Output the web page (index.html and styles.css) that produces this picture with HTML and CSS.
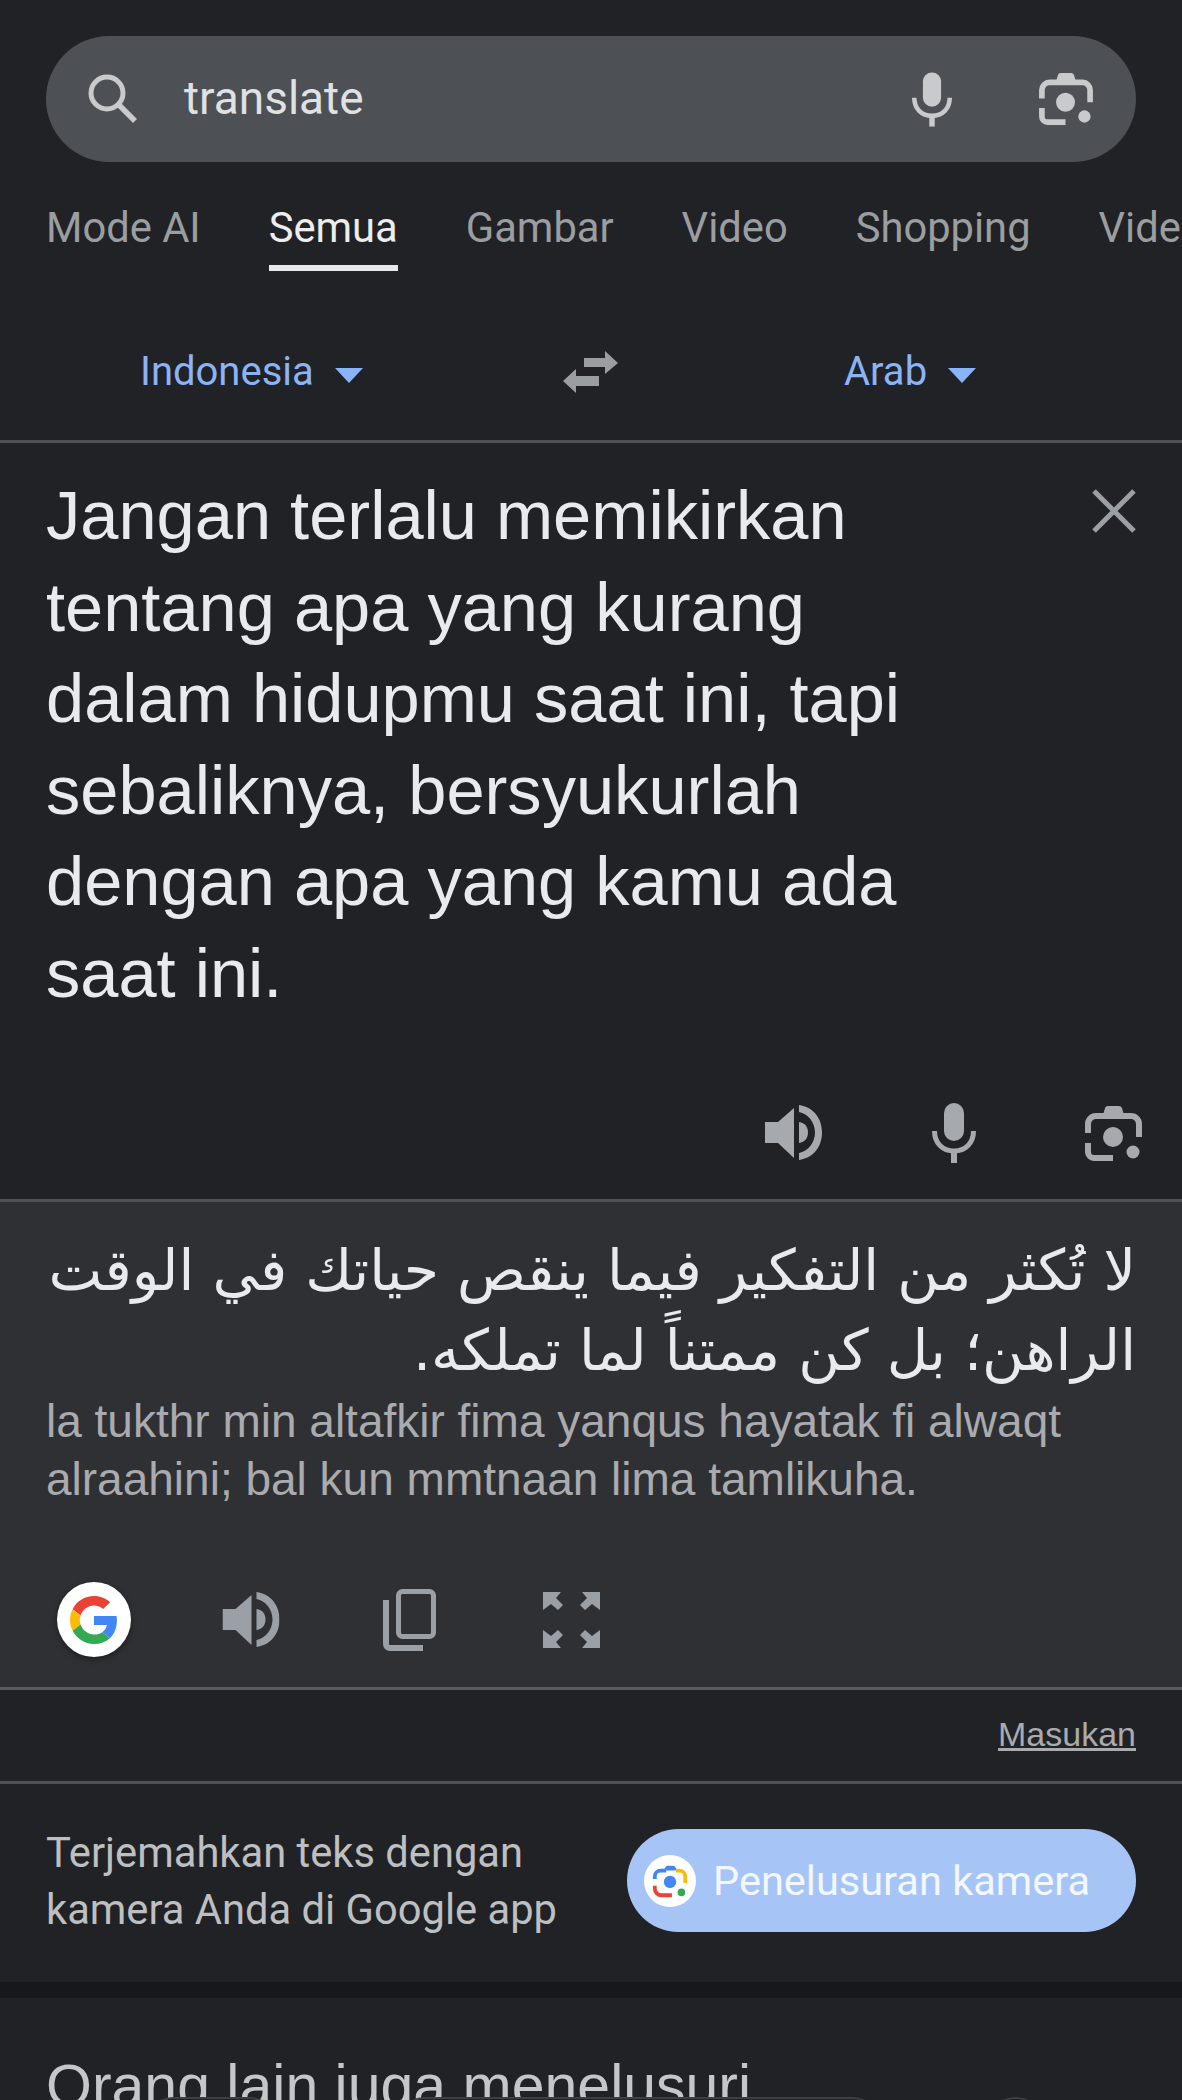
FILE: index.html
```html
<!DOCTYPE html>
<html lang="id">
<head>
    <meta charset="UTF-8">
    <title>translate</title>
    <link rel="stylesheet" href="styles.css">
</head>
<body>
<div class="page">
    <header class="top">
        <div class="search">
            <svg class="search-icon" viewBox="0 0 50 50"><circle cx="19" cy="19" r="16" fill="none" stroke="currentColor" stroke-width="5"/><path d="M30.500 30.500L47 47" stroke="currentColor" stroke-width="5.500" fill="none"/></svg>
            <span class="query">translate</span>
            <svg class="search-mic" viewBox="0 0 44 60"><use href="#mic"/></svg>
            <svg class="search-lens" viewBox="0 0 57 55"><use href="#lens"/></svg>
        </div>
        <nav class="tabs">
            <a href="#">Mode AI</a>
            <a href="#" class="on">Semua</a>
            <a href="#">Gambar</a>
            <a href="#">Video</a>
            <a href="#">Shopping</a>
            <a href="#">Video</a>
        </nav>
    </header>

    <div class="langs">
        <a href="#" class="lang lang-from">Indonesia<i class="caret"></i></a>
        <svg class="swap" viewBox="0 0 55 42"><path d="M21 7h21V0l13 12-13 11v-7H21zM36 25H13v-7L0 30l13 12v-7h23z" fill="currentColor"/></svg>
        <a href="#" class="lang lang-to">Arab<i class="caret"></i></a>
    </div>

    <section class="source">
        <p class="source-text">Jangan terlalu memikirkan tentang apa yang kurang dalam hidupmu saat ini, tapi sebaliknya, bersyukurlah dengan apa yang kamu ada saat ini.</p>
        <svg class="clear" viewBox="0 0 44 44"><path d="M2 2l40 40M42 2L2 42" stroke="currentColor" stroke-width="5" fill="none"/></svg>
        <div class="source-tools">
            <svg class="ic-speaker" viewBox="0 0 57 56"><use href="#speaker"/></svg>
            <svg class="ic-mic" viewBox="0 0 44 60"><use href="#mic"/></svg>
            <svg class="ic-lens" viewBox="0 0 57 55"><use href="#lens"/></svg>
        </div>
    </section>

    <section class="result">
        <p class="arabic" dir="rtl" lang="ar">لا تُكثر من التفكير فيما ينقص حياتك في الوقت<br>الراهن؛ بل كن ممتناً لما تملكه.</p>
        <p class="latin">la tukthr min altafkir fima yanqus hayatak fi alwaqt alraahini; bal kun mmtnaan lima tamlikuha.</p>
        <div class="result-tools">
            <span class="g-badge">
                <svg viewBox="0 0 48 48"><path fill="#ea4335" d="M24 9.500c3.500 0 6.700 1.200 9.200 3.600l6.900-6.900C35.900 2.400 30.500 0 24 0 14.600 0 6.500 5.400 2.600 13.200l8 6.200C12.500 13.700 17.800 9.500 24 9.500z"/><path fill="#4285f4" d="M46.900 24.500c0-1.600-.2-3.100-.4-4.500H24v9h12.900c-.6 3-2.200 5.500-4.700 7.200l7.700 6c4.500-4.200 7-10.300 7-17.700z"/><path fill="#fbbc05" d="M10.600 28.600c-.5-1.500-.8-3-.8-4.600s.3-3.100.8-4.600l-8-6.200C.9 16.500 0 20.100 0 24s.9 7.500 2.600 10.800l8-6.200z"/><path fill="#34a853" d="M24 48c6.500 0 11.900-2.100 15.900-5.800l-7.700-6c-2.200 1.400-4.900 2.300-8.200 2.300-6.200 0-11.500-4.200-13.400-9.900l-8 6.200C6.500 42.600 14.600 48 24 48z"/></svg>
            </span>
            <svg class="ic-speaker2" viewBox="0 0 57 56"><use href="#speaker"/></svg>
            <svg class="ic-copy" viewBox="0 0 53 63"><rect x="15.500" y="3.500" width="35" height="45" rx="4" fill="none" stroke="currentColor" stroke-width="5"/><path d="M3 12v44a4 4 0 0 0 4 4h33" fill="none" stroke="currentColor" stroke-width="6"/></svg>
            <svg class="ic-expand" viewBox="0 0 57 56">
                <path fill="currentColor" d="M0 0h18l-5 6 7 7-5 5-7-6-8 6z"/>
                <path fill="currentColor" d="M0 0h18l-5 6 7 7-5 5-7-6-8 6z" transform="matrix(-1 0 0 1 57 0)"/>
                <path fill="currentColor" d="M0 0h18l-5 6 7 7-5 5-7-6-8 6z" transform="matrix(1 0 0 -1 0 56)"/>
                <path fill="currentColor" d="M0 0h18l-5 6 7 7-5 5-7-6-8 6z" transform="matrix(-1 0 0 -1 57 56)"/>
            </svg>
        </div>
    </section>

    <div class="feedback"><a href="#">Masukan</a></div>

    <section class="promo">
        <p>Terjemahkan teks dengan kamera Anda di Google app</p>
        <a href="#" class="promo-btn">
            <span class="lens-badge">
                <svg viewBox="0 0 40 40"><path d="M4 18v-3a6 6 0 0 1 6-6h6" fill="none" stroke="#4285f4" stroke-width="4"/><path d="M13 9l2-3a3 3 0 0 1 3-2h5a3 3 0 0 1 3 2l2 3z" fill="#4285f4"/><path d="M26 9h4a6 6 0 0 1 6 6v7" fill="none" stroke="#fbbc05" stroke-width="4"/><path d="M4 25v3a7 7 0 0 0 7 7h11" fill="none" stroke="#ea4335" stroke-width="4"/><circle cx="20" cy="21" r="6.500" fill="#4285f4"/><circle cx="32" cy="32" r="4" fill="#34a853"/></svg>
            </span>
            Penelusuran kamera
        </a>
    </section>

    <section class="related">
        <h2>Orang lain juga menelusuri</h2>
        <div class="chips">
            <span class="chip chip-a"></span>
            <span class="chip chip-b"></span>
            <span class="chip chip-c"></span>
        </div>
    </section>
</div>

<svg class="defs" width="0" height="0">
    <symbol id="mic" viewBox="0 0 44 60"><rect x="12" y="0" width="20" height="38" rx="10" fill="currentColor"/><path d="M2.500 28c0 12 8 20 19.500 20s19.500-8 19.500-20" fill="none" stroke="currentColor" stroke-width="5"/><path d="M22 46v14" stroke="currentColor" stroke-width="6"/></symbol>
    <symbol id="lens" viewBox="0 0 57 55"><path d="M3 27V18a8 8 0 0 1 8-8h35a8 8 0 0 1 8 8v13" fill="none" stroke="currentColor" stroke-width="6"/><path d="M18 9l2-7q.5-2 3-2h11q2 0 3 2l2 7z" fill="currentColor"/><path d="M3 37v9a6 6 0 0 0 6 6h19" fill="none" stroke="currentColor" stroke-width="6"/><circle cx="28" cy="31" r="10" fill="currentColor"/><circle cx="48" cy="46" r="6.500" fill="currentColor"/></symbol>
    <symbol id="speaker" viewBox="0 0 57 56"><path d="M0 17h13L29 3v50L13 38H0z" fill="currentColor"/><path d="M34 17c6 1 9 5 9 10.500s-3 9.500-9 10.500z" fill="currentColor"/><path d="M34 0c14 2 23 13 23 27.500S48 53 34 55v-7c9-2 16-10 16-20.500S43 9 34 7z" fill="currentColor"/></symbol>
</svg>
</body>
</html>
```

FILE: styles.css
```css
* {
    margin: 0;
    padding: 0;
    box-sizing: border-box;
}
a {
    text-decoration: none;
    color: inherit;
}
body {
    background: #212226;
    font-family: "Liberation Sans", Arial, sans-serif;
    overflow: hidden;
}
.page {
    width: 1182px;
    height: 2100px;
    overflow: hidden;
}
.defs {
    position: absolute;
}

/* search + tabs */
.top {
    height: 271px;
    padding-top: 36px;
}
.search {
    height: 126px;
    margin: 0 46px;
    padding: 0 43px 0 42px;
    border-radius: 63px;
    background: #4d5054;
    color: #c8cacb;
    display: flex;
    align-items: center;
}
.search-icon {
    width: 50px;
    height: 50px;
}
.query {
    flex: 1;
    margin: 0 0 2px 46px;
    font-family: Roboto, sans-serif;
    font-size: 46px;
    color: #dfe1e3;
}
.search-mic {
    width: 40px;
    height: 55px;
    margin-right: 87px;
}
.search-lens {
    width: 54px;
    height: 52px;
}
.tabs {
    display: flex;
    gap: 68px;
    margin-top: 41px;
    padding-left: 46px;
    height: 68px;
    white-space: nowrap;
    overflow: hidden;
    font-family: Roboto, sans-serif;
    font-size: 41.700px;
    color: #9b9ea1;
}
.tabs a {
    height: 68px;
    flex-shrink: 0;
}
.tabs .on {
    color: #eceded;
    border-bottom: 6px solid #e8e8e8;
}

/* language row */
.langs {
    height: 172px;
    padding-top: 32px;
    border-bottom: 3px solid #505155;
    display: grid;
    grid-template-columns: 500px 190px 1fr;
    align-items: center;
    color: #8ab4f8;
}
.lang {
    display: flex;
    align-items: center;
    color: #8ab4f8;
    font-family: Roboto, sans-serif;
    font-size: 40px;
}
.lang-from {
    padding-left: 140px;
}
.lang-to {
    padding-left: 154px;
}
.caret {
    width: 0;
    height: 0;
    margin: 8px 0 0 21px;
    border-left: 14px solid transparent;
    border-right: 14px solid transparent;
    border-top: 15px solid #8ab4f8;
}
.swap {
    width: 55px;
    height: 42px;
    margin-left: 63px;
    color: #9b9ea1;
}

/* source text */
.source {
    height: 759px;
    position: relative;
    border-bottom: 3px solid #505155;
}
.source-text {
    width: 960px;
    padding: 27px 0 0 46px;
    font-size: 68.600px;
    line-height: 91.500px;
    color: #e8eaed;
}
.clear {
    position: absolute;
    top: 46px;
    right: 46px;
    width: 44px;
    height: 44px;
    color: #9aa0a6;
}
.source-tools {
    position: absolute;
    top: 660px;
    left: 765px;
    display: flex;
    align-items: center;
    color: #a6a9ad;
}
.ic-speaker {
    width: 57px;
    height: 56px;
}
.ic-mic {
    width: 44px;
    height: 60px;
    margin-left: 110px;
}
.ic-lens {
    width: 57px;
    height: 55px;
    margin-left: 109px;
}

/* result */
.result {
    height: 488px;
    background: #2f3034;
    border-bottom: 3px solid #5a5b5f;
    padding: 28px 46px 0;
}
.arabic {
    font-family: "DejaVu Sans", sans-serif;
    font-size: 57px;
    line-height: 80px;
    color: #e8eaed;
    height: 163px;
    white-space: nowrap;
}
.latin {
    font-size: 46px;
    line-height: 57.500px;
    color: #a9abae;
}
.result-tools {
    margin-top: 74px;
    display: flex;
    align-items: center;
    color: #9aa0a6;
}
.g-badge {
    width: 74px;
    height: 75px;
    margin-left: 11px;
    border-radius: 50%;
    background: #fff;
    box-shadow: 0 2px 6px rgba(0,0,0,.4);
    display: flex;
    align-items: center;
    justify-content: center;
}
.g-badge svg {
    width: 48px;
    height: 52px;
}
.ic-speaker2 {
    width: 58px;
    height: 56px;
    margin-left: 91px;
}
.ic-copy {
    width: 53px;
    height: 63px;
    margin-left: 103px;
}
.ic-expand {
    width: 57px;
    height: 56px;
    margin-left: 107px;
}

/* masukan */
.feedback {
    height: 94px;
    border-bottom: 3px solid #505155;
    padding: 25px 46px 0 0;
    text-align: right;
    font-size: 34px;
    color: #a9abae;
}
.feedback a {
    text-decoration: underline;
}

/* camera promo */
.promo {
    height: 214px;
    border-bottom: 16px solid #17181c;
    padding: 45px 46px 0;
    display: flex;
    justify-content: space-between;
}
.promo p {
    width: 540px;
    margin-top: -5px;
    font-size: 41.700px;
    line-height: 57px;
    color: #bdbfc1;
    font-family: Roboto, sans-serif;
}
.promo-btn {
    width: 509px;
    height: 103px;
    border-radius: 52px;
    background: #a6c5f6;
    color: #f3f7fe;
    font-size: 41.500px;
    font-family: Roboto, sans-serif;
    display: flex;
    align-items: center;
    padding-left: 17px;
    gap: 17px;
}
.lens-badge {
    width: 52px;
    height: 52px;
    border-radius: 50%;
    background: #fff;
    display: flex;
    align-items: center;
    justify-content: center;
}
.lens-badge svg {
    width: 38px;
    height: 38px;
}

/* cut off by the bottom of the screenshot */
.related {
    position: relative;
    padding: 54px 46px 0;
}
.related h2 {
    font-size: 59px;
    font-weight: normal;
    color: #c4c6c8;
}
.chips {
    position: absolute;
    top: 99px;
    left: 0;
    height: 60px;
    width: 100%;
    display: flex;
}
.chip {
    height: 60px;
    background: #212226;
    border: 2px solid #3c3f44;
    border-radius: 30px;
}
.chip-a {
    width: 136px;
    margin-left: 143px;
}
.chip-b {
    width: 487px;
    margin-left: 116px;
}
.chip-c {
    width: 57px;
    margin-left: 105px;
}
```
